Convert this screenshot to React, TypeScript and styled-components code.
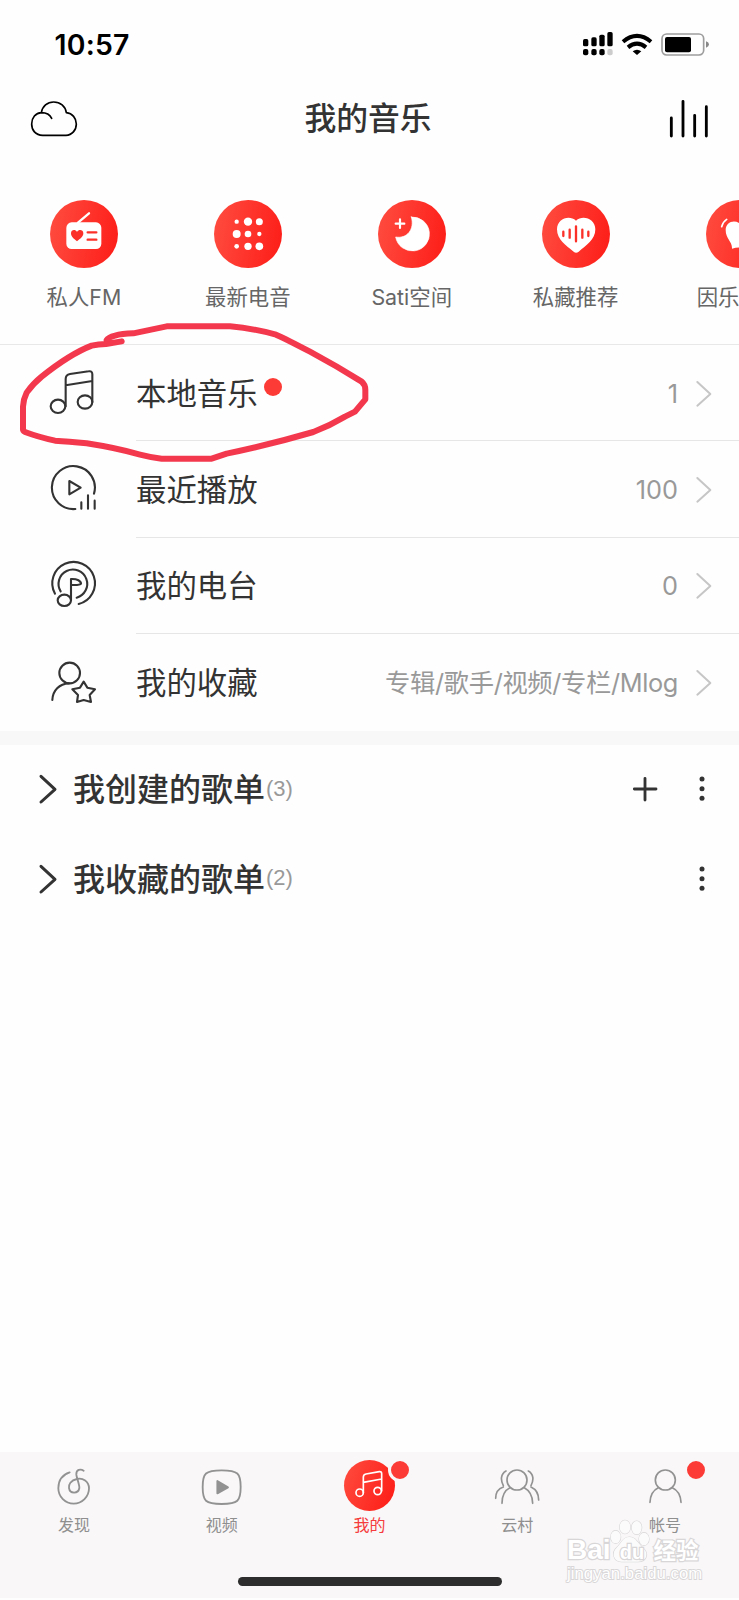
import React from "react";
import styled, { createGlobalStyle } from "styled-components";

const Global = createGlobalStyle`
  * { box-sizing: border-box; }
  body { margin: 0; background: #fff; }
`;

const Screen = styled.div`
  position: relative;
  display: flex;
  flex-direction: column;
  width: 739px;
  height: 1600px;
  overflow: hidden;
  background: #fefefe;
  color: #333;
  font-family: Inter, "Noto Sans CJK SC", sans-serif;
`;

const Glyph = styled.svg<{ $w: number; $h: number }>`
  display: block;
  flex: none;
  width: ${(p) => p.$w}px;
  height: ${(p) => p.$h}px;
  overflow: visible;
  fill: none;
  stroke-linecap: round;
  stroke-linejoin: round;
`;

/* Artwork is drawn on a grid of three units to a pixel. */
type IconProps = {
  x: number;
  y: number;
  w: number;
  h: number;
  stroke?: string;
  width?: number;
  children: React.ReactNode;
};
const Icon = ({ x, y, w, h, stroke = "#333", width = 6.3, children }: IconProps) => (
  <Glyph $w={w} $h={h} viewBox={`${x} ${y} ${w * 3} ${h * 3}`} stroke={stroke} strokeWidth={width}>
    {children}
  </Glyph>
);

const StatusBar = styled.header`
  display: flex;
  align-items: center;
  justify-content: space-between;
  height: 88px;
  padding: 0 30.5px 0 54.5px;
`;
const Clock = styled.span`
  padding-top: 1px;
  font-size: 28.4px;
  font-weight: 600;
  line-height: 34px;
  color: #000;
  letter-spacing: 0.2px;
`;
const StatusIcons = styled.div`
  display: flex;
  align-items: center;
  gap: 9px;
`;

const TitleBar = styled.div`
  display: grid;
  grid-template-columns: 1fr auto 1fr;
  align-items: center;
  height: 60px;
  padding: 0 30px 0 31px;
`;
const Title = styled.h1`
  margin: 0;
  padding: 2px 4px 0 0;
  font-size: 31.8px;
  line-height: 44px;
  font-weight: 500;
`;
const TitleEnd = styled.div`
  display: flex;
  justify-content: flex-end;
`;

const Shortcuts = styled.nav`
  display: flex;
  height: 197px;
  padding: 52px 0 0 2px;
  border-bottom: 1px solid #e8e8e8;
`;
const Shortcut = styled.div`
  display: flex;
  flex: none;
  flex-direction: column;
  align-items: center;
  width: 163.9px;
`;
const Disc = styled.div`
  width: 68px;
  height: 68px;
  border-radius: 50%;
  background: linear-gradient(100deg, #ff4d41, #fd1c17);
`;
const ShortcutLabel = styled.span`
  margin-top: 14px;
  font-size: 21.4px;
  line-height: 30px;
  color: #666;
  white-space: nowrap;
`;

const Row = styled.div`
  display: flex;
  height: 96.4px;
`;
const RowIcon = styled.div`
  display: flex;
  align-items: center;
  width: 136px;
  padding: 0 0 1px 50px;
`;
const RowBody = styled.div<{ $last?: boolean }>`
  display: flex;
  flex: 1;
  align-items: center;
  padding: 2px 27px 0 0;
  border-bottom: ${(p) => (p.$last ? "0" : "1px solid #e6e6e6")};
`;
const RowLabel = styled.span`
  font-size: 30.4px;
  line-height: 44px;
`;
const Dot = styled.i`
  width: 18px;
  height: 18px;
  margin: -14px 0 0 6px;
  border-radius: 50%;
  background: #fc3b36;
`;
const RowValue = styled.span<{ $tight?: boolean }>`
  margin: 0 18px 0 auto;
  font-size: 25.3px;
  line-height: 36px;
  letter-spacing: ${(p) => (p.$tight ? "-0.35px" : "0")};
  color: #999;
`;

const Band = styled.div`
  height: 14px;
  background: #f8f8f8;
`;

const Playlist = styled.div`
  display: flex;
  align-items: center;
  height: 89.3px;
  padding: 0 34.5px 0 39px;
`;
const PlaylistName = styled.h2`
  margin: 0 0 0 16px;
  padding-top: 2px;
  font-size: 32px;
  line-height: 46px;
  font-weight: 500;
`;
const Count = styled.span`
  margin: -1px auto 0 1px;
  font: 22px/30px "Liberation Sans", sans-serif;
  color: #999;
`;
const Actions = styled.div`
  display: flex;
  align-items: center;
  gap: 41.5px;
`;

const BottomBar = styled.footer`
  display: flex;
  flex-direction: column;
  align-items: center;
  height: 146px;
  margin: auto 0 2px;
  background: #f9f7f8;
`;
const Tabs = styled.nav`
  display: flex;
  width: 100%;
  height: 125px;
`;
const Tab = styled.div<{ $active?: boolean }>`
  display: flex;
  flex: 1;
  flex-direction: column;
  align-items: center;
  padding-top: 8px;
  font-size: 16px;
  line-height: 24px;
  color: ${(p) => (p.$active ? "#f53b3b" : "#8f8f8f")};
`;
const TabIcon = styled.div<{ $active?: boolean }>`
  position: relative;
  display: flex;
  align-items: center;
  justify-content: center;
  width: 51px;
  height: 51px;
  margin-bottom: 2px;
  padding-top: ${(p) => (p.$active ? 0 : 2)}px;
  border-radius: 50%;
  background: ${(p) => (p.$active ? "linear-gradient(110deg, #ff4c3f, #fd1b15)" : "none")};
`;
const Badge = styled.i`
  position: absolute;
  top: -2.5px;
  right: -17px;
  width: 24px;
  height: 24px;
  border: 3px solid #f9f7f8;
  border-radius: 50%;
  background: #fc3b36;
`;
const HomeIndicator = styled.div`
  width: 264px;
  height: 9px;
  border-radius: 5px;
  background: #2d2d2d;
`;

const Annotation = styled.svg`
  position: absolute;
  top: 310px;
  left: 0;
  width: 390px;
  height: 160px;
  fill: none;
  stroke: #f3384e;
  stroke-width: 18;
  stroke-linecap: round;
  stroke-linejoin: round;
`;

const Watermark = styled.div`
  position: absolute;
  top: 1518px;
  left: 567px;
  width: 135px;
  color: #fff;
  paint-order: stroke fill;
  -webkit-text-stroke: 2.4px #d8d6d7;
`;
const Brand = styled.div`
  position: relative;
  display: flex;
  align-items: baseline;
  height: 46px;
  padding-top: 14px;
  font: 700 28px/36px "Liberation Sans", "Noto Sans CJK SC", sans-serif;
`;
const Paw = styled.svg`
  position: absolute;
  top: 1px;
  left: 43px;
  width: 42px;
  height: 46px;
  fill: #fcfbfb;
  stroke: #d8d6d7;
  stroke-width: 3.5;
`;
const Du = styled.span`
  position: relative;
  width: 43px;
  text-align: center;
  font-size: 20px;
`;
const Jingyan = styled.span`
  font-size: 22.5px;
`;
const Url = styled.div`
  margin-top: -2px;
  font: 16.8px/24px "Liberation Sans", sans-serif;
  white-space: nowrap;
  -webkit-text-stroke-width: 1.8px;
`;

const RED = "#fb3029";

const Chevron = () => (
  <Icon x={980} y={120} w={16} h={26} stroke="#c6c6c6" width={6}>
    <path d="M984 123 L1023 159 L984 194" />
  </Icon>
);
const Arrow = () => (
  <Icon x={117} y={162} w={18} h={30} width={9}>
    <path d="M123 169 L165 208 L123 246" />
  </Icon>
);
const Plus = () => (
  <Icon x={791} y={172} w={24} h={24} width={8.5}>
    <path d="M795 208 H860 M827 176 V241" />
  </Icon>
);
const More = () => (
  <Icon x={989} y={170} w={6} h={26} stroke="none">
    <g fill="#333">
      <circle cx="998" cy="179" r="7.5" />
      <circle cx="998" cy="208" r="7.5" />
      <circle cx="998" cy="237" r="7.5" />
    </g>
  </Icon>
);

const shortcuts = [
  {
    label: "私人FM",
    cx: 252,
    art: (
      <>
        <rect x="199" y="127" width="105" height="80" rx="16" fill="#fff" />
        <path d="M234 128 L267 100" stroke="#fff" strokeWidth="7" />
        <path d="M231 184 C221 176 213 170 213 160 C213 149 226 147 231 156 C236 147 250 149 250 160 C250 170 241 176 231 184Z" fill={RED} />
        <path d="M263 157 H289 M263 179 H289" stroke={RED} strokeWidth="7" />
      </>
    ),
  },
  {
    label: "最新电音",
    cx: 744,
    art: (
      <g fill="#fff">
        {[
          [710, 125, 6.5], [744, 125, 12.5], [778, 125, 10.5],
          [710, 162, 12], [744, 162, 10], [778, 162, 6.5],
          [710, 199, 7], [744, 199, 11], [778, 199, 11.5],
        ].map(([x, y, r]) => (
          <circle key={`${x}-${y}`} cx={x} cy={y} r={r} />
        ))}
      </g>
    ),
  },
  {
    label: "Sati空间",
    cx: 128,
    art: (
      <>
        <path d="M126 111 A51 51 0 1 1 79 171 C113 177 137 148 126 111Z" fill="#fff" stroke="#fff" strokeWidth="2" />
        <path d="M79 131 H105 M92 118 V144" stroke="#fff" strokeWidth="6.5" />
      </>
    ),
  },
  {
    label: "私藏推荐",
    cx: 620,
    art: (
      <>
        <path d="M613 215 C590 196 563 180 563 148 C563 117 599 103 620 122 C641 103 678 117 678 148 C678 180 650 196 628 215 Q620 221 613 215Z" fill="#fff" />
        <path d="M582 155 V168 M601 149 V173 M620 139 V184 M639 149 V173 M657 155 V168" stroke={RED} strokeWidth="7" />
      </>
    ),
  },
  {
    label: "因乐交友",
    cx: 1110,
    art: (
      <>
        <path d="M1086 206 C1087 184 1067 177 1067 150 C1067 128 1091 117 1110 131 C1129 117 1153 128 1153 150 C1153 177 1133 184 1134 206 Q1110 199 1086 206Z" fill="#fff" />
        <path d="M1055 140 Q1059 125 1070 118" stroke="#fff" strokeWidth="5" />
      </>
    ),
  },
];

const rows = [
  {
    label: "本地音乐",
    value: "1",
    dot: true,
    icon: (
      <Icon x={150} y={184} w={46} h={44}>
        <ellipse cx="174" cy="290" rx="22" ry="20" />
        <ellipse cx="255" cy="277" rx="22" ry="20" />
        <path d="M197 290 V208 Q197 195 210 193 L266 185 Q277 183 277 194 V277 M197 227 L277 214" />
      </Icon>
    ),
  },
  {
    label: "最近播放",
    value: "100",
    icon: (
      <Icon x={150} y={469} w={46} h={44}>
        <path d="M282 549 A64.5 64.5 0 1 0 226 595" />
        <path d="M208 511 V551 L242 531Z" />
        <path d="M244 575 V594 M264 554 V594 M284 570 V594" />
      </Icon>
    ),
  },
  {
    label: "我的电台",
    value: "0",
    icon: (
      <Icon x={150} y={98} w={46} h={44}>
        <path d="M165 190 A64 64 0 1 1 236 221" />
        <path d="M182 183 A43 43 0 1 1 230 202" />
        <ellipse cx="193" cy="210" rx="20" ry="17" />
        <path d="M213 210 V146 C232 145 243 152 243 160 Q241 165 214 164" />
      </Icon>
    ),
  },
  {
    label: "我的收藏",
    value: "专辑/歌手/视频/专栏/Mlog",
    tight: true,
    icon: (
      <Icon x={150} y={388} w={46} h={44}>
        <circle cx="209" cy="427" r="31" />
        <path d="M157 508 C158 479 178 459 207 458" />
        <path d="M251 453 L262 471 L285 476 L269 493 L273 514 L251 508 L231 514 L234 493 L217 476 L240 471Z" />
      </Icon>
    ),
  },
];

const GREY = "#929292";
const tabs = [
  {
    label: "发现",
    icon: (
      <Icon x={172} y={88} w={32} h={34} stroke={GREY} width={5.5}>
        <path d="M207 95 C182 103 173 124 173 143 A46 46 0 0 0 265 143 C265 122 246 111 229 115 C210 119 203 132 205 142 C208 161 233 160 236 142 C237 133 228 112 227 102 C226 86 240 84 249 90" />
      </Icon>
    ),
  },
  {
    label: "视频",
    icon: (
      <Icon x={605} y={88} w={39} h={36} stroke={GREY} width={5.5}>
        <path d="M607 142 C607 101 615 92 664 92 C713 92 721 101 721 142 C721 184 713 193 664 193 C615 193 607 184 607 142Z" />
        <path d="M651 124 V161 L683 143Z" fill={GREY} />
      </Icon>
    ),
  },
  {
    label: "我的",
    active: true,
    badge: true,
    icon: (
      <Icon x={1065} y={99} w={28} h={27} stroke="#fff" width={5}>
        <circle cx="1079" cy="161" r="11" />
        <circle cx="1133" cy="156" r="11" />
        <path d="M1090 161 V114 Q1090 107 1098 105 L1138 98 Q1145 97 1145 104 V156 M1090 130 L1145 120" />
      </Icon>
    ),
  },
  {
    label: "云村",
    icon: (
      <Icon x={380} y={88} w={44} h={35} stroke={GREY} width={5}>
        <circle cx="446" cy="121" r="30" />
        <path d="M401 191 C401 168 411 151 425 144 M493 191 C493 168 481 151 468 144" />
        <path d="M413 94 C397 103 396 121 405 138 M405 142 C390 147 382 159 382 176 M480 94 C496 103 497 121 488 138 M488 142 C503 149 511 162 511 181" />
      </Icon>
    ),
  },
  {
    label: "帐号",
    badge: true,
    icon: (
      <Icon x={842} y={88} w={32} h={35} stroke={GREY} width={5}>
        <circle cx="891" cy="121" r="30" />
        <path d="M845 188 C846 165 857 150 870 144 M938 188 C937 165 925 150 912 144" />
      </Icon>
    ),
  },
];

export default function App() {
  return (
    <Screen>
      <Global />
      <StatusBar>
        <Clock>10:57</Clock>
        <StatusIcons>
          <Icon x={641} y={93} w={30} h={24} stroke="none">
            <g fill="#000">
              <rect x="641" y="114" width="16" height="22" rx="5" />
              <rect x="666" y="109" width="16" height="27" rx="5" />
              <rect x="690" y="101" width="16" height="35" rx="5" />
              <rect x="714" y="93" width="16" height="43" rx="5" />
              <rect x="641" y="144" width="16" height="19" rx="6" />
              <rect x="666" y="144" width="16" height="19" rx="6" />
              <rect x="690" y="144" width="16" height="19" rx="6" />
              <rect x="714" y="144" width="16" height="19" rx="6" fill="#ccc" />
            </g>
          </Icon>
          <Icon x={759} y={97} w={30} h={22} stroke="#000" width={12}>
            <g strokeLinecap="butt">
              <path d="M762 123 Q804 88 846 123" />
              <path d="M777 140 Q804 118 831 140" />
            </g>
            <path d="M791 152 Q804 142 817 152 L804 163Z" fill="#000" stroke="none" />
          </Icon>
          <Icon x={876} y={98} w={48} h={23} stroke="#9d9d9d" width={5}>
            <rect x="879" y="101" width="125" height="63" rx="14" />
            <rect x="888" y="110" width="78" height="46" rx="6" fill="#000" stroke="none" />
            <path d="M1011 123 Q1020 126 1020 132 Q1020 139 1011 142Z" fill="#888" stroke="none" />
          </Icon>
        </StatusIcons>
      </StatusBar>
      <TitleBar>
        <Icon x={93} y={302} w={46} h={35} stroke="#000" width={5}>
          <path d="M128 405 C106 405 95 389 95 371 C95 352 107 338 124 337 C127 318 142 305 161 305 C181 305 196 318 199 337 C217 339 229 353 229 371 C229 389 216 405 198 405Z M124 337 Q147 337 155 354" />
        </Icon>
        <Title>我的音乐</Title>
        <TitleEnd>
          <Icon x={904} y={297} w={39} h={38} stroke="#000" width={8.5}>
            <path d="M908 354 V408 M943 304 V408 M978 346 V408 M1013 320 V408" />
          </Icon>
        </TitleEnd>
      </TitleBar>
      <Shortcuts>
        {shortcuts.map((s) => (
          <Shortcut key={s.label}>
            <Disc>
              <Icon x={s.cx - 102} y={60} w={68} h={68} stroke="none">
                {s.art}
              </Icon>
            </Disc>
            <ShortcutLabel>{s.label}</ShortcutLabel>
          </Shortcut>
        ))}
      </Shortcuts>
      {rows.map((r, i) => (
        <Row key={r.label}>
          <RowIcon>{r.icon}</RowIcon>
          <RowBody $last={i === rows.length - 1}>
            <RowLabel>{r.label}</RowLabel>
            {r.dot && <Dot />}
            <RowValue $tight={r.tight}>{r.value}</RowValue>
            <Chevron />
          </RowBody>
        </Row>
      ))}
      <Band />
      <Playlist>
        <Arrow />
        <PlaylistName>我创建的歌单</PlaylistName>
        <Count>(3)</Count>
        <Actions>
          <Plus />
          <More />
        </Actions>
      </Playlist>
      <Playlist>
        <Arrow />
        <PlaylistName>我收藏的歌单</PlaylistName>
        <Count>(2)</Count>
        <Actions>
          <More />
        </Actions>
      </Playlist>
      <BottomBar>
        <Tabs>
          {tabs.map((t) => (
            <Tab key={t.label} $active={t.active}>
              <TabIcon $active={t.active}>
                {t.icon}
                {t.badge && <Badge />}
              </TabIcon>
              {t.label}
            </Tab>
          ))}
        </Tabs>
        <HomeIndicator />
      </BottomBar>
      <Annotation viewBox="0 0 1170 480">
        <path d="M320 90 Q325 82 345 77 Q365 71 400 70 L500 49 H690 Q760 55 828 74 Q860 88 930 125 Q1010 168 1085 215 Q1096 224 1096 240 V268 L1065 305 L1035 320 Q990 347 940 366 Q810 404 680 431 L635 446 H485 Q450 442 420 434 Q350 414 260 400 Q205 394 165 392 Q115 381 75 366 Q68 362 69 355 V290 Q70 268 80 248 Q98 222 125 200 Q210 132 275 107 Q295 102 318 102 L365 94" />
      </Annotation>
      <Watermark>
        <Brand>
          <Paw viewBox="728 238 126 138">
            <ellipse cx="773" cy="262" rx="16" ry="20" />
            <ellipse cx="808" cy="264" rx="15" ry="20" />
            <ellipse cx="745" cy="292" rx="15" ry="19" />
            <ellipse cx="830" cy="298" rx="15" ry="19" />
            <path d="M786 292 C766 292 762 312 748 324 C732 338 738 366 762 366 C778 366 796 366 812 366 C840 366 844 340 828 326 C812 312 806 292 786 292Z" />
          </Paw>
          <span>Bai</span>
          <Du>du</Du>
          <Jingyan>经验</Jingyan>
        </Brand>
        <Url>jingyan.baidu.com</Url>
      </Watermark>
    </Screen>
  );
}
